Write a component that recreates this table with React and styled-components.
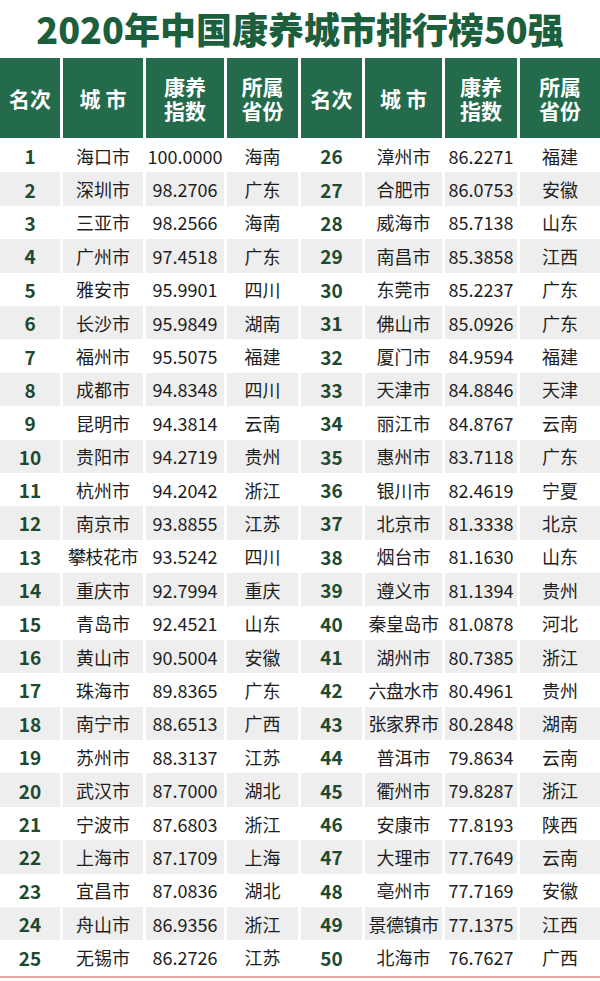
import React from 'react';
import styled, { createGlobalStyle } from 'styled-components';

const GlobalStyle = createGlobalStyle`
  html, body {
    margin: 0;
    padding: 0;
    background: #ffffff;
  }
  body {
    font-family: "Noto Sans CJK SC", "Noto Sans", sans-serif;
  }
`;

const left = [
  ['1', '海口市', '100.0000', '海南'],
  ['2', '深圳市', '98.2706', '广东'],
  ['3', '三亚市', '98.2566', '海南'],
  ['4', '广州市', '97.4518', '广东'],
  ['5', '雅安市', '95.9901', '四川'],
  ['6', '长沙市', '95.9849', '湖南'],
  ['7', '福州市', '95.5075', '福建'],
  ['8', '成都市', '94.8348', '四川'],
  ['9', '昆明市', '94.3814', '云南'],
  ['10', '贵阳市', '94.2719', '贵州'],
  ['11', '杭州市', '94.2042', '浙江'],
  ['12', '南京市', '93.8855', '江苏'],
  ['13', '攀枝花市', '93.5242', '四川'],
  ['14', '重庆市', '92.7994', '重庆'],
  ['15', '青岛市', '92.4521', '山东'],
  ['16', '黄山市', '90.5004', '安徽'],
  ['17', '珠海市', '89.8365', '广东'],
  ['18', '南宁市', '88.6513', '广西'],
  ['19', '苏州市', '88.3137', '江苏'],
  ['20', '武汉市', '87.7000', '湖北'],
  ['21', '宁波市', '87.6803', '浙江'],
  ['22', '上海市', '87.1709', '上海'],
  ['23', '宜昌市', '87.0836', '湖北'],
  ['24', '舟山市', '86.9356', '浙江'],
  ['25', '无锡市', '86.2726', '江苏']
];

const right = [
  ['26', '漳州市', '86.2271', '福建'],
  ['27', '合肥市', '86.0753', '安徽'],
  ['28', '威海市', '85.7138', '山东'],
  ['29', '南昌市', '85.3858', '江西'],
  ['30', '东莞市', '85.2237', '广东'],
  ['31', '佛山市', '85.0926', '广东'],
  ['32', '厦门市', '84.9594', '福建'],
  ['33', '天津市', '84.8846', '天津'],
  ['34', '丽江市', '84.8767', '云南'],
  ['35', '惠州市', '83.7118', '广东'],
  ['36', '银川市', '82.4619', '宁夏'],
  ['37', '北京市', '81.3338', '北京'],
  ['38', '烟台市', '81.1630', '山东'],
  ['39', '遵义市', '81.1394', '贵州'],
  ['40', '秦皇岛市', '81.0878', '河北'],
  ['41', '湖州市', '80.7385', '浙江'],
  ['42', '六盘水市', '80.4961', '贵州'],
  ['43', '张家界市', '80.2848', '湖南'],
  ['44', '普洱市', '79.8634', '云南'],
  ['45', '衢州市', '79.8287', '浙江'],
  ['46', '安康市', '77.8193', '陕西'],
  ['47', '大理市', '77.7649', '云南'],
  ['48', '亳州市', '77.7169', '安徽'],
  ['49', '景德镇市', '77.1375', '江西'],
  ['50', '北海市', '76.7627', '广西']
];

const headers = ['名次', '城 市', '康养\n指数', '所属\n省份'];

const Page = styled.div`
  width: 600px;
  background: #ffffff;
`;

const Title = styled.h1`
  margin: 0;
  height: 58px;
  display: flex;
  align-items: center;
  justify-content: center;
  font-size: 36px;
  font-weight: 900;
  color: #1d5e3c;
  line-height: 1;
  padding-bottom: 2px;
  box-sizing: border-box;
`;

const Table = styled.div`
  display: grid;
  grid-template-columns: 60px 80px 78px 71px 61px 77px 72px 80px;
  grid-template-rows: 81px;
  grid-auto-rows: 33.4px;
  column-gap: 3px;
  row-gap: 0;
  border-bottom: 2px solid #e3aaa4;
  padding-bottom: 2px;
`;

const HeadCell = styled.div`
  background: #236b4b;
  color: #ffffff;
  font-size: 21px;
  font-weight: 700;
  line-height: 24px;
  white-space: pre-line;
  display: flex;
  align-items: center;
  justify-content: center;
  text-align: center;
  margin-bottom: 1px;
`;

const Cell = styled.div`
  background: ${p => (p.$shade ? '#eeeeee' : '#ffffff')};
  color: ${p => (p.$rank ? '#1d4a30' : '#1e1e1e')};
  font-size: ${p => (p.$rank ? '19px' : '18px')};
  font-weight: ${p => (p.$rank ? 700 : 400)};
  display: flex;
  align-items: center;
  justify-content: center;
  white-space: nowrap;
  letter-spacing: ${p => (p.$tight ? '-0.5px' : '0')};
`;

const App = () => (
  <Page>
    <GlobalStyle />
    <Title>2020年中国康养城市排行榜50强</Title>
    <Table>
      {[...headers, ...headers].map((h, i) => (
        <HeadCell key={`h${i}`}>{h}</HeadCell>
      ))}
      {left.map((row, i) =>
        [...row, ...right[i]].map((v, j) => (
          <Cell
            key={`${i}-${j}`}
            $shade={i % 2 === 1}
            $rank={j % 4 === 0}
            $tight={j % 4 === 1 && v.length > 3}
          >
            {v}
          </Cell>
        ))
      )}
    </Table>
  </Page>
);

export default App;
